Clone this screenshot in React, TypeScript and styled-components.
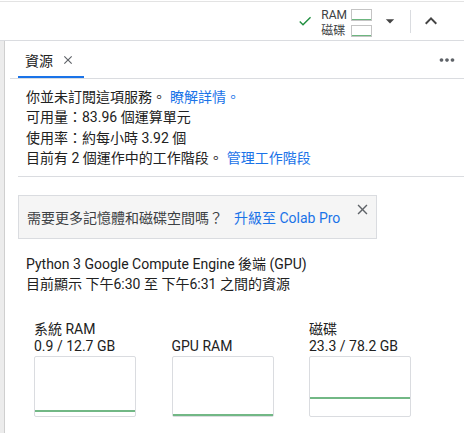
import React from 'react';
import styled, { createGlobalStyle } from 'styled-components';

const GlobalStyle = createGlobalStyle`
  body {
    margin: 0;
    background: #fff;
    color: #212121;
    font-family: Roboto, "Noto Sans CJK TC", sans-serif;
    font-size: 14px;
  }
`;

const Page = styled.div`
  width: 464px;
  height: 433px;
  overflow: hidden;
  display: flex;
  flex-direction: column;
`;

const TopBar = styled.div`
  margin-top: 1px;
  height: 38px;
  border-top: 1px solid #e3e3e3;
  border-bottom: 1px solid #dadce0;
  display: flex;
  align-items: center;
  justify-content: flex-end;
  padding-right: 21px;
`;

const UsageGrid = styled.div`
  display: grid;
  grid-template-columns: auto 21px;
  column-gap: 4px;
  row-gap: 4px;
  align-items: center;
  margin-left: 8px;
  padding-top: 3px;
  font-size: 12px;
  line-height: 12px;
  color: #3c4043;
`;

const MiniBox = styled.div`
  position: relative;
  height: 10px;
  border: 1px solid #c4c4c4;

  &::after {
    content: '';
    position: absolute;
    left: 0;
    right: 0;
    bottom: 0;
    height: 1px;
    background: #6cb67f;
  }
`;

const IconButton = styled.span<{ $ml: number }>`
  display: flex;
  margin-left: ${(p) => p.$ml}px;
  color: #444;
`;

const Separator = styled.div`
  width: 1px;
  height: 23px;
  background: #dadce0;
  margin-left: 10px;
`;

const Main = styled.div`
  flex: 1;
  display: flex;
`;

const LeftStrip = styled.div`
  width: 4px;
  background: #ececec;
  border-right: 1px solid #cfcfcf;
`;

const Panel = styled.div`
  flex: 1;
  display: flex;
  flex-direction: column;
`;

const TabHeader = styled.div`
  height: 37px;
  margin-left: 5px;
  border-bottom: 1px solid #dadce0;
  display: flex;
  align-items: stretch;
  justify-content: space-between;
`;

const Tab = styled.div`
  margin-left: 8px;
  padding: 2px 9px 0 7px;
  border-bottom: 2px solid #1a73e8;
  display: flex;
  align-items: center;
  color: #212121;
`;

const TabClose = styled.span`
  display: flex;
  margin-left: 8px;
  color: #5f6368;
`;

const MoreButton = styled.span`
  display: flex;
  align-items: center;
  margin-right: 6px;
  color: #5f6368;
`;

const Info = styled.div`
  padding: 8px 0 0 21px;
  line-height: 20.3px;
`;

const Link = styled.a`
  color: #1a73e8;
  text-decoration: none;
  margin-left: 4px;
`;

const Divider = styled.div`
  height: 1px;
  background: #dadce0;
  margin: 8px 0 0 13px;
`;

const Banner = styled.div`
  box-sizing: border-box;
  margin: 18px 0 0 13px;
  width: 359px;
  height: 44px;
  background: #f5f5f5;
  border: 1px solid #dadce0;
  display: flex;
  align-items: center;
  padding-left: 8px;
  color: #3c4043;
`;

const BannerLink = styled.a`
  color: #1a73e8;
  text-decoration: none;
  margin-left: 11px;
`;

const BannerClose = styled.span`
  display: flex;
  margin-left: auto;
  margin-right: 5px;
  align-self: flex-start;
  margin-top: 5px;
  color: #5f6368;
`;

const Runtime = styled.div`
  padding: 15px 0 0 21px;
  line-height: 20px;
`;

const Charts = styled.div`
  display: grid;
  grid-template-columns: repeat(3, 102px);
  column-gap: 35.5px;
  padding: 27px 0 0 29px;
`;

const Chart = styled.div`
  display: flex;
  flex-direction: column;
`;

const ChartTitle = styled.div`
  height: 34px;
  display: flex;
  flex-direction: column;
  justify-content: flex-end;
  line-height: 17px;
  white-space: nowrap;
`;

const ChartBox = styled.div`
  margin-top: 1px;
  height: 59px;
  border: 1px solid #dadce0;
  border-radius: 2px;
  display: flex;
`;

const Check = () => (
  <svg width="16" height="16" viewBox="0 0 24 24" fill="#1e8e3e">
    <path d="M9 16.2L4.8 12l-1.4 1.4L9 19 21 7l-1.4-1.4L9 16.2z" />
  </svg>
);

const CloseIcon = ({ size }: { size: number }) => (
  <svg width={size} height={size} viewBox="0 0 24 24" fill="currentColor">
    <path d="M19 6.41L17.59 5 12 10.59 6.41 5 5 6.41 10.59 12 5 17.59 6.41 19 12 13.41 17.59 19 19 17.59 13.41 12z" />
  </svg>
);

const charts = [
  { title: '系統 RAM', value: '0.9 / 12.7 GB', ratio: 0.9 / 12.7 },
  { title: 'GPU RAM', value: '', ratio: 0 },
  { title: '磁碟', value: '23.3 / 78.2 GB', ratio: 23.3 / 78.2 },
];

const UsageChart = ({ ratio }: { ratio: number }) => {
  const y = 58 - ratio * 57;
  return (
    <svg width="100" height="59" viewBox="0 0 100 59">
      <line x1="0" y1={y} x2="100" y2={y} stroke="#72b885" strokeWidth="2" />
    </svg>
  );
};

export default function App() {
  return (
    <Page>
      <GlobalStyle />
      <TopBar>
        <Check />
        <UsageGrid>
          <span>RAM</span>
          <MiniBox />
          <span>磁碟</span>
          <MiniBox />
        </UsageGrid>
        <IconButton $ml={8}>
          <svg width="20" height="20" viewBox="0 0 24 24" fill="currentColor">
            <path d="M7 10l5 5 5-5z" />
          </svg>
        </IconButton>
        <Separator />
        <IconButton $ml={8}>
          <svg width="24" height="24" viewBox="0 0 24 24" fill="currentColor">
            <path d="M12 8l-6 6 1.41 1.41L12 10.83l4.59 4.58L18 14z" />
          </svg>
        </IconButton>
      </TopBar>
      <Main>
        <LeftStrip />
        <Panel>
          <TabHeader>
            <Tab>
              資源
              <TabClose>
                <CloseIcon size={14} />
              </TabClose>
            </Tab>
            <MoreButton>
              <svg width="22" height="22" viewBox="0 0 24 24" fill="currentColor">
                <path d="M6 10c-1.1 0-2 .9-2 2s.9 2 2 2 2-.9 2-2-.9-2-2-2zm12 0c-1.1 0-2 .9-2 2s.9 2 2 2 2-.9 2-2-.9-2-2-2zm-6 0c-1.1 0-2 .9-2 2s.9 2 2 2 2-.9 2-2-.9-2-2-2z" />
              </svg>
            </MoreButton>
          </TabHeader>
          <Info>
            <div>
              你並未訂閱這項服務。<Link>瞭解詳情。</Link>
            </div>
            <div>可用量：83.96 個運算單元</div>
            <div>使用率：約每小時 3.92 個</div>
            <div>
              目前有 2 個運作中的工作階段。<Link>管理工作階段</Link>
            </div>
          </Info>
          <Divider />
          <Banner>
            需要更多記憶體和磁碟空間嗎？
            <BannerLink>升級至 Colab Pro</BannerLink>
            <BannerClose>
              <CloseIcon size={17} />
            </BannerClose>
          </Banner>
          <Runtime>
            <div>Python 3 Google Compute Engine 後端 (GPU)</div>
            <div>目前顯示 下午6:30 至 下午6:31 之間的資源</div>
          </Runtime>
          <Charts>
            {charts.map((c) => (
              <Chart key={c.title}>
                <ChartTitle>
                  <div>{c.value ? c.title : ''}</div>
                  <div>{c.value || c.title}</div>
                </ChartTitle>
                <ChartBox>
                  <UsageChart ratio={c.ratio} />
                </ChartBox>
              </Chart>
            ))}
          </Charts>
        </Panel>
      </Main>
    </Page>
  );
}
